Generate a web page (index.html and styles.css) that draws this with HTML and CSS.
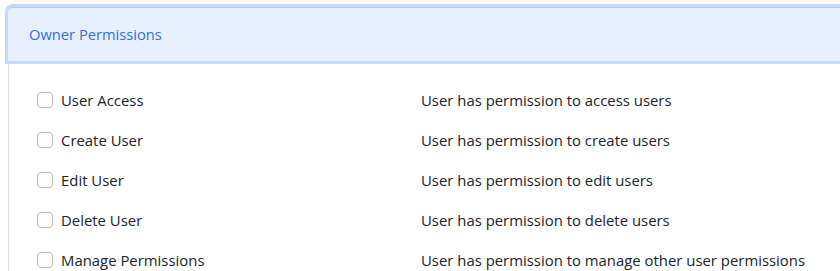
FILE: index.html
```html
<!DOCTYPE html>
<html lang="en">
<head>
    <title>Owner Permissions</title>
    <meta charset="UTF-8">
    <link rel="stylesheet" href="styles.css">
</head>
<body>
<div class="card">
    <div class="card-header">Owner Permissions</div>
    <div class="card-body">
        <div class="perm">
            <label class="perm-name"><span class="check"></span>User Access</label>
            <div class="perm-desc">User has permission to access users</div>
        </div>
        <div class="perm">
            <label class="perm-name"><span class="check"></span>Create User</label>
            <div class="perm-desc">User has permission to create users</div>
        </div>
        <div class="perm">
            <label class="perm-name"><span class="check"></span>Edit User</label>
            <div class="perm-desc">User has permission to edit users</div>
        </div>
        <div class="perm">
            <label class="perm-name"><span class="check"></span>Delete User</label>
            <div class="perm-desc">User has permission to delete users</div>
        </div>
        <div class="perm">
            <label class="perm-name"><span class="check"></span>Manage Permissions</label>
            <div class="perm-desc">User has permission to manage other user permissions</div>
        </div>
    </div>
</div>
</body>
</html>
```

FILE: styles.css
```css
body {
    margin: 0;
    background-color: #fff;
    font-family: "Open Sans", "Noto Sans", sans-serif;
    color: #212529;
}

.card {
    margin: 7px 0 0 8px;
    border-left: 1px solid #dcdcdc;
}

.card-header {
    height: 53px;
    line-height: 53px;
    padding-left: 21px;
    margin-left: -1px;
    background-color: #e8f0fe;
    color: #2f6fdf;
    font-size: 14.7px;
    border-top-left-radius: 5px;
    box-shadow: 0 0 0 3px #c4dafc;
    border-top: 1px solid #b4cdf3;
}

.card-body {
    padding: 19px 0 0 28px;
}

.perm {
    display: flex;
    height: 40px;
    align-items: center;
    font-size: 14.9px;
}

.perm-name {
    display: flex;
    align-items: center;
    width: 384px;
}

.check {
    width: 14px;
    height: 14px;
    border: 1px solid #bdbdbd;
    border-radius: 4px;
    margin-right: 8px;
}
```
